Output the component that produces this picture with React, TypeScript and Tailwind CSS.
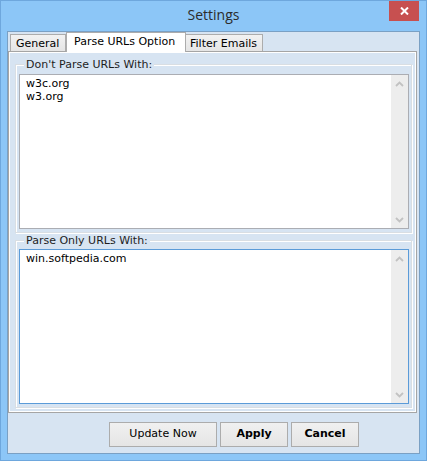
import React from 'react';

const Chevron: React.FC<{ up?: boolean }> = ({ up }) => (
    <svg width="9" height="6" viewBox="0 0 9 6">
        <path
            d={up ? 'M1 5 L4.5 1.5 L8 5' : 'M1 1 L4.5 4.5 L8 1'}
            fill="none"
            stroke="#c2c2c2"
            strokeWidth="1.8"
        />
    </svg>
);

const ListBox: React.FC<{ lines: string[]; focused?: boolean }> = ({ lines, focused }) => (
    <div
        className={`flex h-[155px] bg-white border ${focused ? 'border-[#5b9bd8]' : 'border-[#abadb3]'}`}
    >
        <div className="flex-1 pl-[6px] pt-[2px] leading-[13px] text-black">
            {lines.map((l) => (
                <div key={l}>{l}</div>
            ))}
        </div>
        <div className="w-[17px] bg-[#ededed] flex flex-col justify-between">
            <div className="h-[17px] flex items-center justify-center">
                <Chevron up />
            </div>
            <div className="h-[17px] flex items-center justify-center">
                <Chevron />
            </div>
        </div>
    </div>
);

const GroupBox: React.FC<{ label: string; className: string; children: React.ReactNode }> = ({
    label,
    className,
    children,
}) => (
    <div
        className={`relative ml-[5px] mr-[3px] pl-[3px] pr-[2px] pb-[3px] border border-[#d9dee3] shadow-[inset_1px_1px_0_#ffffff,1px_1px_0_#ffffff] ${className}`}
    >
        <span className="absolute left-[8px] top-[-7px] px-[2px] bg-[#d7e4f2] leading-[13px] text-[#1e1e1e] whitespace-nowrap">
            {label}
        </span>
        {children}
    </div>
);

export default function App() {
    return (
        <div className="w-[427px] h-[461px] bg-[#8cc6f7] border border-[#6ea7dd] flex flex-col">
            {/* title bar */}
            <div className="h-[30px] flex items-start">
                <div className="w-[37px]" />
                <div className="flex-1 text-center pt-[4px] leading-[19px] text-[14px] text-[#2b2b2b] font-['Open_Sans',sans-serif]">
                    Settings
                </div>
                <div className="w-[30px] h-[20px] mr-[7px] bg-[#c75050] flex items-center justify-center">
                    <svg width="9" height="8" viewBox="0 0 9 8">
                        <path d="M1 0.5 L8 7.5 M8 0.5 L1 7.5" stroke="#ffffff" strokeWidth="2" />
                    </svg>
                </div>
            </div>

            {/* client area */}
            <div className="mx-[6px] mb-[6px] flex-1 border border-[#7aa0c4] bg-[#d7e4f2] flex flex-col text-[11px] font-['DejaVu_Sans',sans-serif]">
                <div className="h-[19px] pl-[2px] flex items-end">
                    <div className="w-[56px] h-[17px] pl-[5px] pt-[2px] leading-[13px] border border-b-0 border-[#acacac] bg-linear-to-b from-[#f2f2f2] to-[#e5e5e5] text-black">
                        General
                    </div>
                    <div className="relative z-10 w-[120px] h-[20px] mb-[-1px] pl-[7px] pt-[2px] leading-[13px] border border-b-0 border-[#acacac] bg-white text-black">
                        Parse URLs Option
                    </div>
                    <div className="w-[77px] h-[17px] pl-[4px] pt-[2px] leading-[13px] border border-b-0 border-l-0 border-[#acacac] bg-linear-to-b from-[#f2f2f2] to-[#e5e5e5] text-black">
                        Filter Emails
                    </div>
                </div>

                <div className="mr-[2px] h-[362px] border border-[#a5a5a5]">
                    <div className="h-full border border-white flex flex-col">
                        <GroupBox label="Don't Parse URLs With:" className="mt-[11px] pt-[9px]">
                            <ListBox lines={['w3c.org', 'w3.org']} />
                        </GroupBox>
                        <GroupBox label="Parse Only URLs With:" className="mt-[7px] pt-[8px]">
                            <ListBox lines={['win.softpedia.com']} focused />
                        </GroupBox>
                    </div>
                </div>

                <div className="mt-[9px] pr-[60px] flex justify-end gap-[3px]">
                    <button className="w-[108px] h-[25px] border border-[#acacac] bg-linear-to-b from-[#f0f0f0] to-[#e5e5e5] text-black">
                        Update Now
                    </button>
                    <button className="w-[68px] h-[25px] border border-[#acacac] bg-linear-to-b from-[#f0f0f0] to-[#e5e5e5] text-black font-bold">
                        Apply
                    </button>
                    <button className="w-[68px] h-[25px] border border-[#acacac] bg-linear-to-b from-[#f0f0f0] to-[#e5e5e5] text-black font-bold">
                        Cancel
                    </button>
                </div>
            </div>
        </div>
    );
}
